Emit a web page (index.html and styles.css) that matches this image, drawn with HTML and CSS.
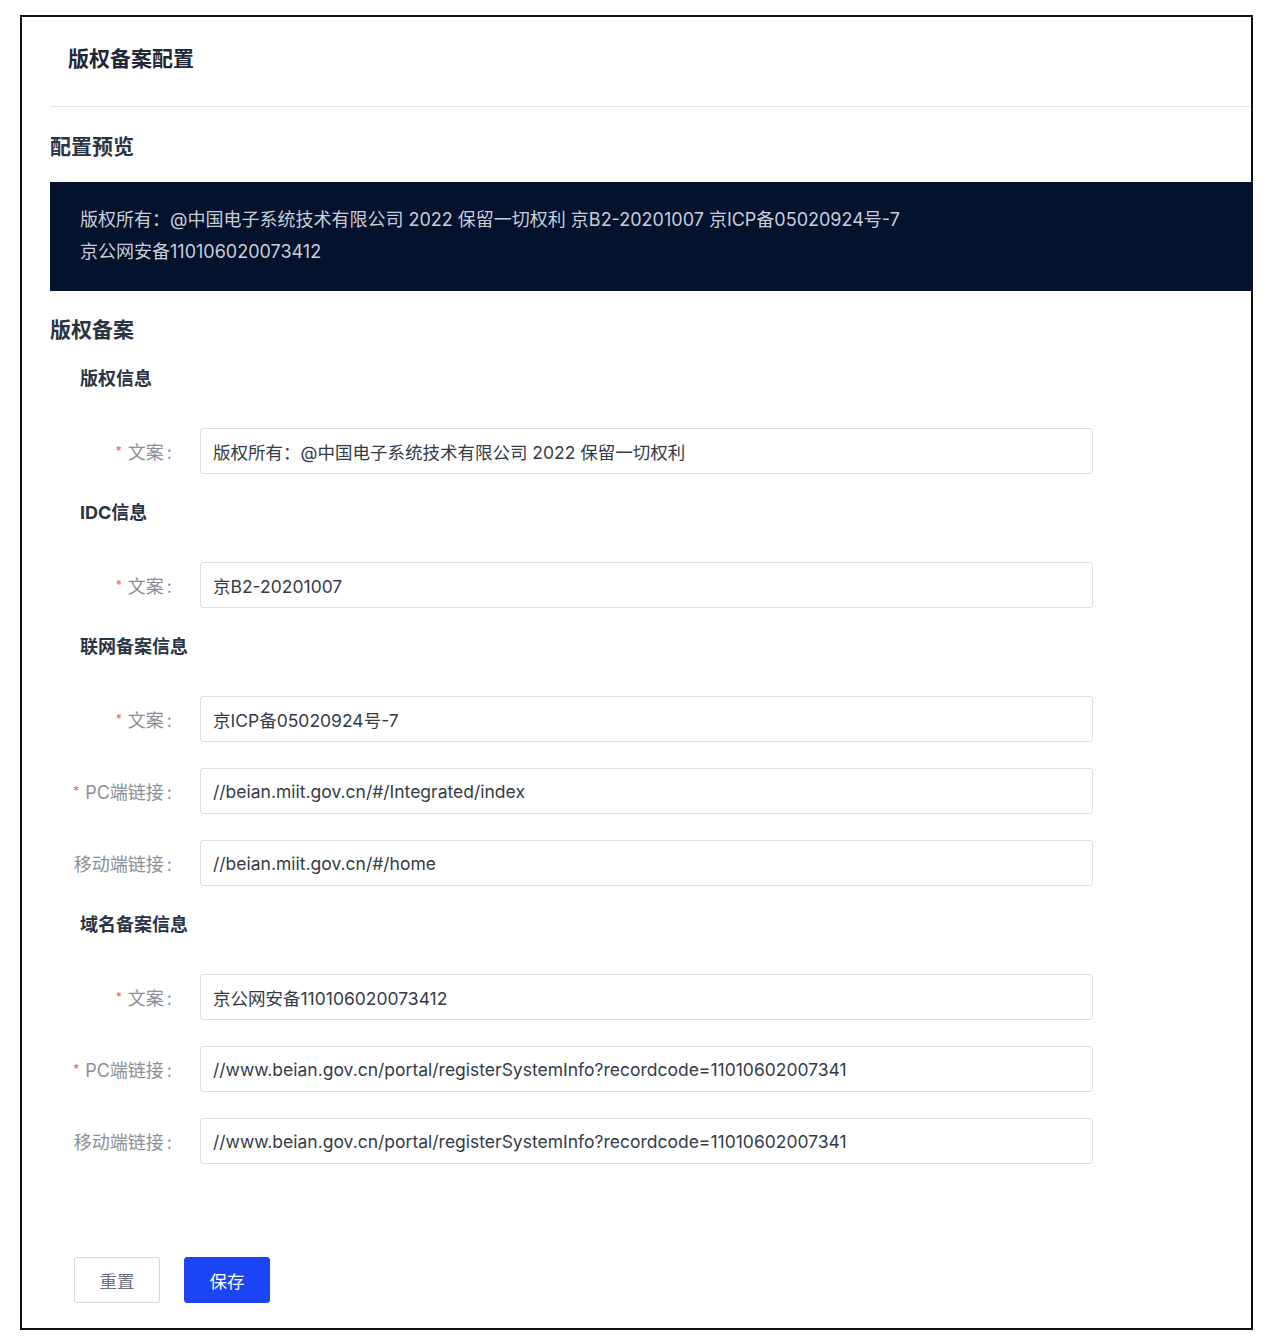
FILE: index.html
```html
<!DOCTYPE html>
<html lang="zh-CN">
<head>
<meta charset="utf-8">
<title>版权备案配置</title>
<link rel="stylesheet" href="styles.css">
</head>
<body>
<div class="frame">
  <div class="page-header"><h1 class="page-title">版权备案配置</h1></div>
  <div class="content">
    <div class="divider"></div>
    <h2 class="section-title">配置预览</h2>
    <div class="preview">
      <p>版权所有：@中国电子系统技术有限公司 2022 保留一切权利 京B2-20201007 京ICP备05020924号-7</p>
      <p>京公网安备110106020073412</p>
    </div>
    <h2 class="section-title section-gap">版权备案</h2>

    <div class="group">
      <h3 class="group-title">版权信息</h3>
      <div class="form-item">
        <label class="label"><span class="req">*</span>文案<span class="colon">:</span></label>
        <div class="input">版权所有：@中国电子系统技术有限公司 2022 保留一切权利</div>
      </div>
    </div>

    <div class="group">
      <h3 class="group-title">IDC信息</h3>
      <div class="form-item">
        <label class="label"><span class="req">*</span>文案<span class="colon">:</span></label>
        <div class="input">京B2-20201007</div>
      </div>
    </div>

    <div class="group">
      <h3 class="group-title">联网备案信息</h3>
      <div class="form-item">
        <label class="label"><span class="req">*</span>文案<span class="colon">:</span></label>
        <div class="input">京ICP备05020924号-7</div>
      </div>
      <div class="form-item">
        <label class="label"><span class="req">*</span>PC端链接<span class="colon">:</span></label>
        <div class="input">//beian.miit.gov.cn/#/Integrated/index</div>
      </div>
      <div class="form-item">
        <label class="label">移动端链接<span class="colon">:</span></label>
        <div class="input">//beian.miit.gov.cn/#/home</div>
      </div>
    </div>

    <div class="group">
      <h3 class="group-title">域名备案信息</h3>
      <div class="form-item">
        <label class="label"><span class="req">*</span>文案<span class="colon">:</span></label>
        <div class="input">京公网安备110106020073412</div>
      </div>
      <div class="form-item">
        <label class="label"><span class="req">*</span>PC端链接<span class="colon">:</span></label>
        <div class="input">//www.beian.gov.cn/portal/registerSystemInfo?recordcode=11010602007341</div>
      </div>
      <div class="form-item">
        <label class="label">移动端链接<span class="colon">:</span></label>
        <div class="input">//www.beian.gov.cn/portal/registerSystemInfo?recordcode=11010602007341</div>
      </div>
    </div>

    <div class="actions">
      <button class="btn btn-default">重置</button>
      <button class="btn btn-primary">保存</button>
    </div>
  </div>
</div>
</body>
</html>
```

FILE: styles.css
```css
* { box-sizing: border-box; }
html, body { margin: 0; padding: 0; background: #fff; }
body {
  font-family: Inter, "Noto Sans CJK SC", sans-serif;
  color: #1f2937;
}
.frame {
  margin: 15px 0 0 20px;
  width: 1233px;
  height: 1315px;
  border: 2px solid #111;
  background: #fff;
}
.page-header {
  height: 89px;
  padding: 28px 0 0 46px;
}
.page-title {
  margin: 0;
  font-size: 21px;
  line-height: 28px;
  font-weight: 700;
  color: #1f2937;
}
.content {
  padding-left: 28px;
}
.divider {
  height: 1px;
  background: #e3e5e8;
}
.section-title {
  margin: 26px 0 0;
  font-size: 21px;
  line-height: 28px;
  font-weight: 700;
  color: #2b3444;
}
.section-gap { margin-top: 25px; }
.preview {
  margin-top: 21px;
  height: 109px;
  background: #03122d;
  padding: 22px 30px 0;
  color: #c9ced8;
  font-size: 18px;
  line-height: 32px;
}
.preview p { margin: 0; white-space: nowrap; }
.group-title {
  margin: 0 0 37px 30px;
  font-size: 18px;
  line-height: 24px;
  font-weight: 700;
  color: #2b3444;
}
.section-gap + .group .group-title { margin-top: 23px; }
.group + .group .group-title { margin-top: 27px; }
.form-item {
  display: flex;
  align-items: center;
  height: 46px;
  margin-bottom: 26px;
}
.form-item:last-child { margin-bottom: 0; }
.label {
  width: 150px;
  padding-right: 28px;
  text-align: right;
  font-size: 18px;
  color: #8a8f99;
  white-space: nowrap;
}
.colon { margin-left: 3px; }
.req {
  color: #f0605a;
  font-size: 12px;
  margin-right: 6px;
  vertical-align: 4px;
}
.input {
  width: 893px;
  height: 46px;
  border: 1px solid #dcdfe4;
  border-radius: 3px;
  padding: 0 12px;
  display: flex;
  align-items: center;
  font-size: 17.5px;
  color: #343b48;
  white-space: nowrap;
}
.actions {
  display: flex;
  gap: 24px;
  margin: 93px 0 0 24px;
}
.btn {
  width: 86px;
  height: 46px;
  border-radius: 3px;
  font-family: inherit;
  font-size: 17.5px;
  cursor: pointer;
}
.btn-default {
  background: #fff;
  border: 1px solid #d4d7dd;
  color: #6b7280;
}
.btn-primary {
  background: #1c45f5;
  border: 1px solid #1c45f5;
  color: #fff;
}
```
